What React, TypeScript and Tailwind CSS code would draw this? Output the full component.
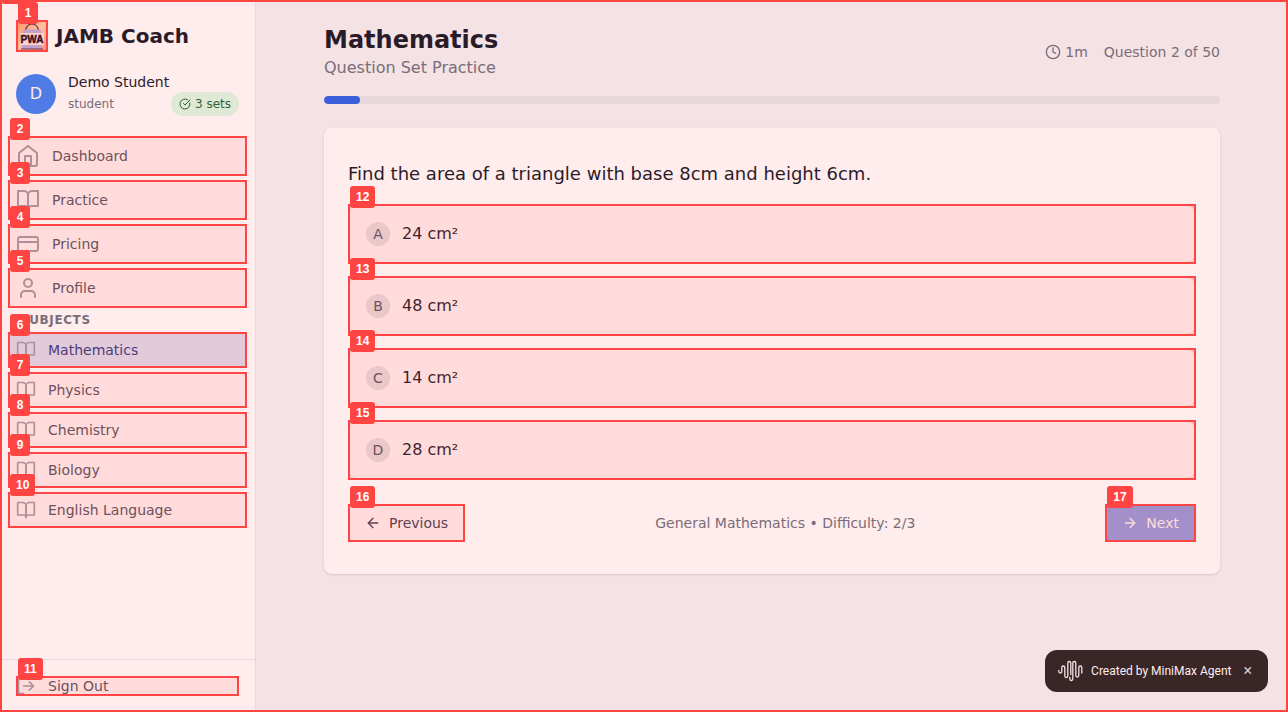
import { useState, type ReactNode } from "react";

function Mark({ n, children = null }: { n: number; children?: ReactNode }) {
  return (
    <>
      {children}
      <span
        aria-hidden="true"
        className="pointer-events-none absolute inset-0 z-20 border-2 border-[#ff4444] bg-[#ff4444]/10"
      />
      <span className="pointer-events-none absolute -top-[18px] left-0.5 z-30 flex h-[22px] min-w-5 items-center justify-center rounded-[3px] bg-[#ff4444] px-1.5 font-['Liberation_Sans',sans-serif] text-xs font-bold leading-none tracking-normal text-white">
        {n}
      </span>
    </>
  );
}

function Icon({ size, className = "", children }: { size: number; className?: string; children: ReactNode }) {
  return (
    <svg
      aria-hidden="true"
      width={size}
      height={size}
      viewBox="0 0 24 24"
      fill="none"
      stroke="currentColor"
      strokeWidth="2"
      strokeLinecap="round"
      strokeLinejoin="round"
      className={`shrink-0 ${className}`}
    >
      {children}
    </svg>
  );
}

const home = (
  <>
    <path d="m3 9 9-7 9 7v11a2 2 0 0 1-2 2H5a2 2 0 0 1-2-2z" />
    <polyline points="9 22 9 12 15 12 15 22" />
  </>
);
const book = (
  <>
    <path d="M2 3h6a4 4 0 0 1 4 4v14a3 3 0 0 0-3-3H2z" />
    <path d="M22 3h-6a4 4 0 0 0-4 4v14a3 3 0 0 1 3-3h7z" />
  </>
);
const card = (
  <>
    <rect width="20" height="14" x="2" y="5" rx="2" />
    <line x1="2" x2="22" y1="10" y2="10" />
  </>
);
const user = (
  <>
    <path d="M19 21v-2a4 4 0 0 0-4-4H9a4 4 0 0 0-4 4v2" />
    <circle cx="12" cy="7" r="4" />
  </>
);

const pages = [
  { label: "Dashboard", icon: home },
  { label: "Practice", icon: book },
  { label: "Pricing", icon: card },
  { label: "Profile", icon: user },
];
const subjects = ["Mathematics", "Physics", "Chemistry", "Biology", "English Language"];
const options = ["24 cm²", "48 cm²", "14 cm²", "28 cm²"];

function Logo() {
  return (
    <svg role="img" aria-label="JAMB Coach logo" width="32" height="32" viewBox="0 0 32 32">
      <defs>
        <linearGradient id="logo-bg" x1="0" y1="0" x2="1" y2="1">
          <stop offset="0" stopColor="#ff9f70" />
          <stop offset="0.5" stopColor="#ffe0b4" />
          <stop offset="1" stopColor="#ff9d80" />
        </linearGradient>
      </defs>
      <rect width="32" height="32" fill="url(#logo-bg)" />
      <path d="M9.500 11C10 7 12.500 4 16 4s6 3 6.500 7" fill="none" stroke="#3a2530" strokeWidth="1.2" />
      <rect x="7" y="9.500" width="18" height="4" rx="1" fill="#b4b8e6" />
      <rect x="6" y="24" width="20" height="5" fill="#b4b8e6" />
      <path d="M5 29h22" stroke="#46304a" strokeWidth="1" />
      <rect x="4" y="13" width="24" height="12" fill="#fff4f2" />
      <text x="16" y="22.500" textAnchor="middle" fontFamily="Liberation Sans, sans-serif" fontSize="10" fontWeight="700" fill="#120713" stroke="#120713" strokeWidth="0.5">
        PWA
      </text>
    </svg>
  );
}

function Sidebar({ subject, onSubject }: { subject: string; onSubject: (s: string) => void }) {
  return (
    <aside className="flex w-64 shrink-0 flex-col border-r border-gray-200 bg-white">
      <div className="flex items-center gap-2 px-4 pt-5">
        <div className="relative size-8">
          <Mark n={1}>
            <Logo />
          </Mark>
        </div>
        <span className="text-xl font-bold leading-8 text-[#111827]">JAMB Coach</span>
      </div>

      <div className="mt-5 flex items-center gap-3 px-4">
        <div className="flex size-10 shrink-0 items-center justify-center rounded-full bg-[#3b82f6] text-base text-white">
          D
        </div>
        <div className="min-w-0 flex-1">
          <p className="text-sm text-[#111827]">Demo Student</p>
          <div className="flex items-center justify-between">
            <span className="text-xs text-[#6b7280]">student</span>
            <span className="flex h-6 items-center gap-1 rounded-full bg-[#dcfce7] px-2 text-xs text-[#166534]">
              <Icon size={12}>
                <path d="M21.8 10A10 10 0 1 1 17 3.335" />
                <path d="m9 11 3 3L22 4" />
              </Icon>
              3 sets
            </span>
          </div>
        </div>
      </div>

      <nav className="mt-5 flex-1 px-2">
        <div className="flex flex-col gap-1">
          {pages.map((p, i) => (
            <a key={p.label} href="#" className="relative flex h-10 items-center gap-3 px-2 text-sm text-[#4b5563]">
              <Mark n={i + 2}>
                <Icon size={24} className="text-[#9ca3af]">{p.icon}</Icon>
                {p.label}
              </Mark>
            </a>
          ))}
        </div>
        <h2 className="my-1 px-3 text-xs font-bold uppercase tracking-wider text-[#6b7280]">Subjects</h2>
        <div className="flex flex-col gap-1">
          {subjects.map((s, i) => (
            <button
              key={s}
              type="button"
              onClick={() => onSubject(s)}
              className={`relative flex h-9 items-center gap-3 px-2 text-left text-sm ${
                s === subject ? "bg-[#dbeafe] text-[#1e3a8a]" : "text-[#4b5563]"
              }`}
            >
              <Mark n={i + 6}>
                <Icon size={20} className="text-[#9ca3af]">{book}</Icon>
                {s}
              </Mark>
            </button>
          ))}
        </div>
      </nav>

      <div className="border-t border-gray-200 p-4">
        <button type="button" className="relative flex w-full items-center gap-3 text-left text-sm text-[#4b5563]">
          <Mark n={11}>
            <Icon size={20} className="text-[#9ca3af]">
              <path d="M9 21H5a2 2 0 0 1-2-2V5a2 2 0 0 1 2-2h4" />
              <polyline points="16 17 21 12 16 7" />
              <line x1="21" x2="9" y1="12" y2="12" />
            </Icon>
            Sign Out
          </Mark>
        </button>
      </div>
    </aside>
  );
}

function Question() {
  return (
    <section className="mt-6 rounded-lg bg-white px-6 py-8 shadow">
      <h2 className="text-lg text-[#111827]">Find the area of a triangle with base 8cm and height 6cm.</h2>
      <div className="mt-4 flex flex-col gap-3">
        {options.map((o, i) => (
          <button
            key={o}
            type="button"
            className="relative flex h-[60px] items-center gap-3 rounded-lg border-2 border-gray-200 px-4 text-left text-base text-[#111827]"
          >
            <span className="flex size-6 shrink-0 items-center justify-center rounded-full bg-[#e5e7eb] text-sm text-[#4b5563]">
              {"ABCD"[i]}
            </span>
            {o}
            <span className="absolute -inset-0.5">
              <Mark n={i + 12} />
            </span>
          </button>
        ))}
      </div>
      <div className="mt-6 flex items-center justify-between">
        <button type="button" className="relative flex h-[38px] items-center gap-2 px-[17px] text-sm text-[#374151]">
          <Mark n={16}>
            <Icon size={16}>
              <path d="m12 19-7-7 7-7" />
              <path d="M19 12H5" />
            </Icon>
            Previous
          </Mark>
        </button>
        <p className="text-sm text-[#6b7280]">General Mathematics • Difficulty: 2/3</p>
        <button type="button" className="relative flex h-[38px] items-center gap-2 bg-[#8ea2ea] px-[17px] text-sm text-white">
          <Mark n={17}>
            <Icon size={16}>
              <path d="M5 12h14" />
              <path d="m12 5 7 7-7 7" />
            </Icon>
            Next
          </Mark>
        </button>
      </div>
    </section>
  );
}

function AgentNotice() {
  const [open, setOpen] = useState(true);
  if (!open) return null;
  return (
    <div className="fixed bottom-5 right-5 flex h-[42px] items-center gap-2 rounded-xl bg-[#242324] pl-3 pr-4 font-[Roboto,sans-serif] text-xs text-white">
      <svg
        aria-hidden="true"
        width="26"
        height="24"
        viewBox="0 0 26 24"
        fill="none"
        stroke="#f3f4f6"
        strokeWidth="1.3"
        strokeLinecap="round"
      >
        <path d="M1.800 11.500v1a1.500 1.500 0 0 0 3 0V8.500a1.500 1.500 0 0 1 3 0v8.500a1.500 1.500 0 0 0 3 0V4a1.500 1.500 0 0 1 3 0v11.500" />
        <path d="M12.800 18.500v1.500a1.500 1.500 0 0 0 3 0V4a1.500 1.500 0 0 1 3 0v12.500a1.500 1.500 0 0 0 3 0v-8a1.500 1.500 0 0 1 3 0v5.500" />
      </svg>
      <span>Created by MiniMax Agent</span>
      <button type="button" aria-label="Close" onClick={() => setOpen(false)} className="ml-1 text-base leading-none text-gray-300">
        ×
      </button>
    </div>
  );
}

export default function App() {
  const [subject, setSubject] = useState("Mathematics");
  return (
    <div className="relative flex min-h-screen bg-[#f3f4f6] font-['DejaVu_Sans',sans-serif]">
      <Sidebar subject={subject} onSubject={setSubject} />
      <main className="flex-1 px-8 py-6">
        <div className="mx-auto max-w-4xl">
          <header className="flex items-center justify-between">
            <div>
              <h1 className="text-2xl font-bold text-[#111827]">{subject}</h1>
              <p className="text-base text-[#6b7280]">Question Set Practice</p>
            </div>
            <div className="flex items-center gap-4 text-sm text-[#6b7280]">
              <span className="flex items-center gap-1">
                <Icon size={16}>
                  <circle cx="12" cy="12" r="10" />
                  <polyline points="12 6 12 12 16 14" />
                </Icon>
                1m
              </span>
              <span>Question 2 of 50</span>
            </div>
          </header>
          <div
            role="progressbar"
            aria-label="Question progress"
            aria-valuenow={2}
            aria-valuemin={0}
            aria-valuemax={50}
            className="mt-4 h-2 overflow-hidden rounded-full bg-[#e5e7eb]"
          >
            <div className="h-2 w-[4%] rounded-full bg-[#2563eb]" />
          </div>
          <Question />
        </div>
      </main>
      <AgentNotice />
      <div
        aria-hidden="true"
        className="pointer-events-none absolute inset-0 z-10 border-2 border-[#ff4444] bg-[#ff4444]/10"
      >
        <span className="absolute left-0 top-0 h-0.5 w-5 rounded-b-[3px] bg-[#ff4444]" />
      </div>
    </div>
  );
}
